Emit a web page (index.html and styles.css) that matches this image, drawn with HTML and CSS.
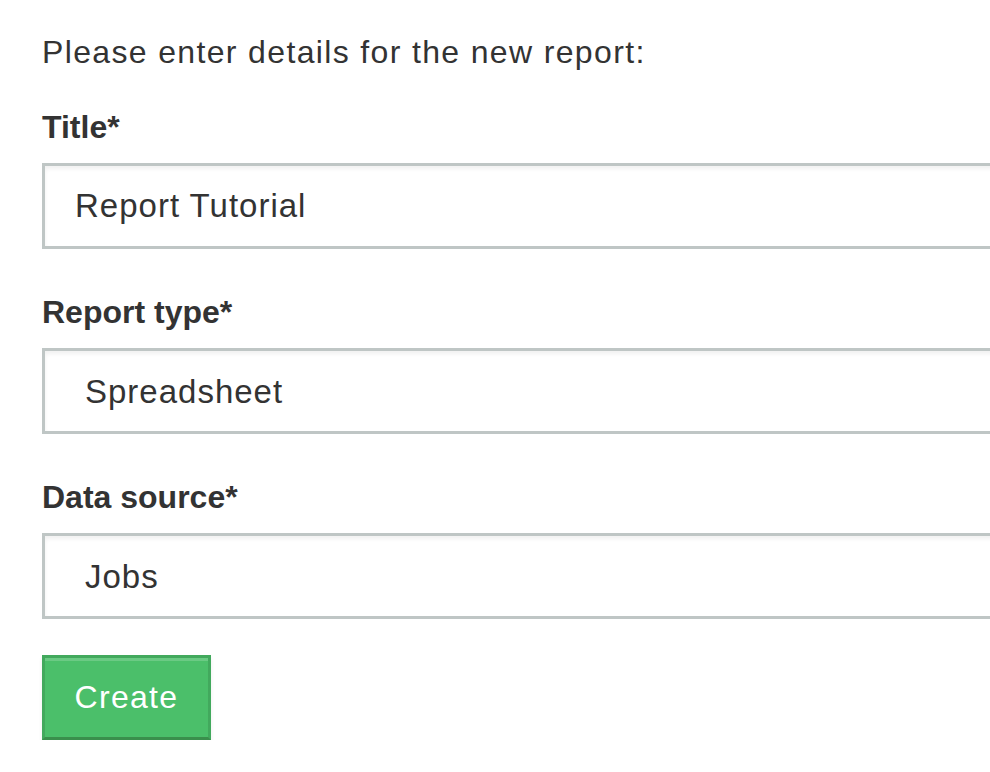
FILE: index.html
```html
<!DOCTYPE html>
<html>
<head>
    <title>New report</title>
    <link rel="stylesheet" href="styles.css">
</head>
<body>
    <form class="report-form">
        <p class="intro">Please enter details for the new report:</p>

        <div class="form-group">
            <label for="report-title">Title*</label>
            <input type="text" id="report-title" class="form-control" value="Report Tutorial">
        </div>

        <div class="form-group">
            <label for="report-type">Report type*</label>
            <select id="report-type" class="form-control select">
                <option>Spreadsheet</option>
                <option>Chart</option>
            </select>
        </div>

        <div class="form-group">
            <label for="data-source">Data source*</label>
            <select id="data-source" class="form-control select">
                <option>Jobs</option>
                <option>Customers</option>
            </select>
        </div>

        <button type="button" class="btn-create">Create</button>
    </form>
</body>
</html>
```

FILE: styles.css
```css
/* Report form, zoomed layout */
html, body {
    margin: 0;
    padding: 0;
    background-color: #fff;
    overflow: hidden;
}

body {
    font-family: "Liberation Sans", Arial, sans-serif;
    font-size: 32px;
    line-height: 40px;
    color: #333;
}

.report-form {
    width: 1100px;
    padding: 32px 0 0 42px;
}

.intro {
    margin: 0 0 35px 0;
    letter-spacing: 1.35px;
}

.form-group {
    margin-bottom: 43px;
}

.form-group:last-of-type {
    margin-bottom: 36px;
}

label {
    display: block;
    font-weight: bold;
    margin-bottom: 16px;
}

.form-control {
    display: block;
    box-sizing: border-box;
    width: 100%;
    height: 86px;
    margin: 0;
    padding: 0 30px;
    border: 3px solid #bfc6c5;
    border-radius: 0;
    background-color: #fff;
    box-shadow: inset 0 3px 4px rgba(0, 0, 0, 0.06);
    font-family: inherit;
    font-size: 33px;
    letter-spacing: 1px;
    color: #333;
    outline: none;
}

.select {
    -webkit-appearance: none;
    appearance: none;
    padding-left: 40px;
}

.btn-create {
    box-sizing: border-box;
    height: 85px;
    width: 169px;
    padding: 0;
    background-color: #4bbf6a;
    border: 3px solid #42a95d;
    border-bottom-color: #3a8f4c;
    border-radius: 0;
    box-shadow: inset 0 3px 0 rgba(255, 255, 255, 0.18), 0 3px 4px rgba(0, 0, 0, 0.07);
    color: #fff;
    font-family: inherit;
    font-size: 32px;
    letter-spacing: 1.3px;
    cursor: pointer;
}

.btn-create:hover {
    background-color: #44b061;
}
```
